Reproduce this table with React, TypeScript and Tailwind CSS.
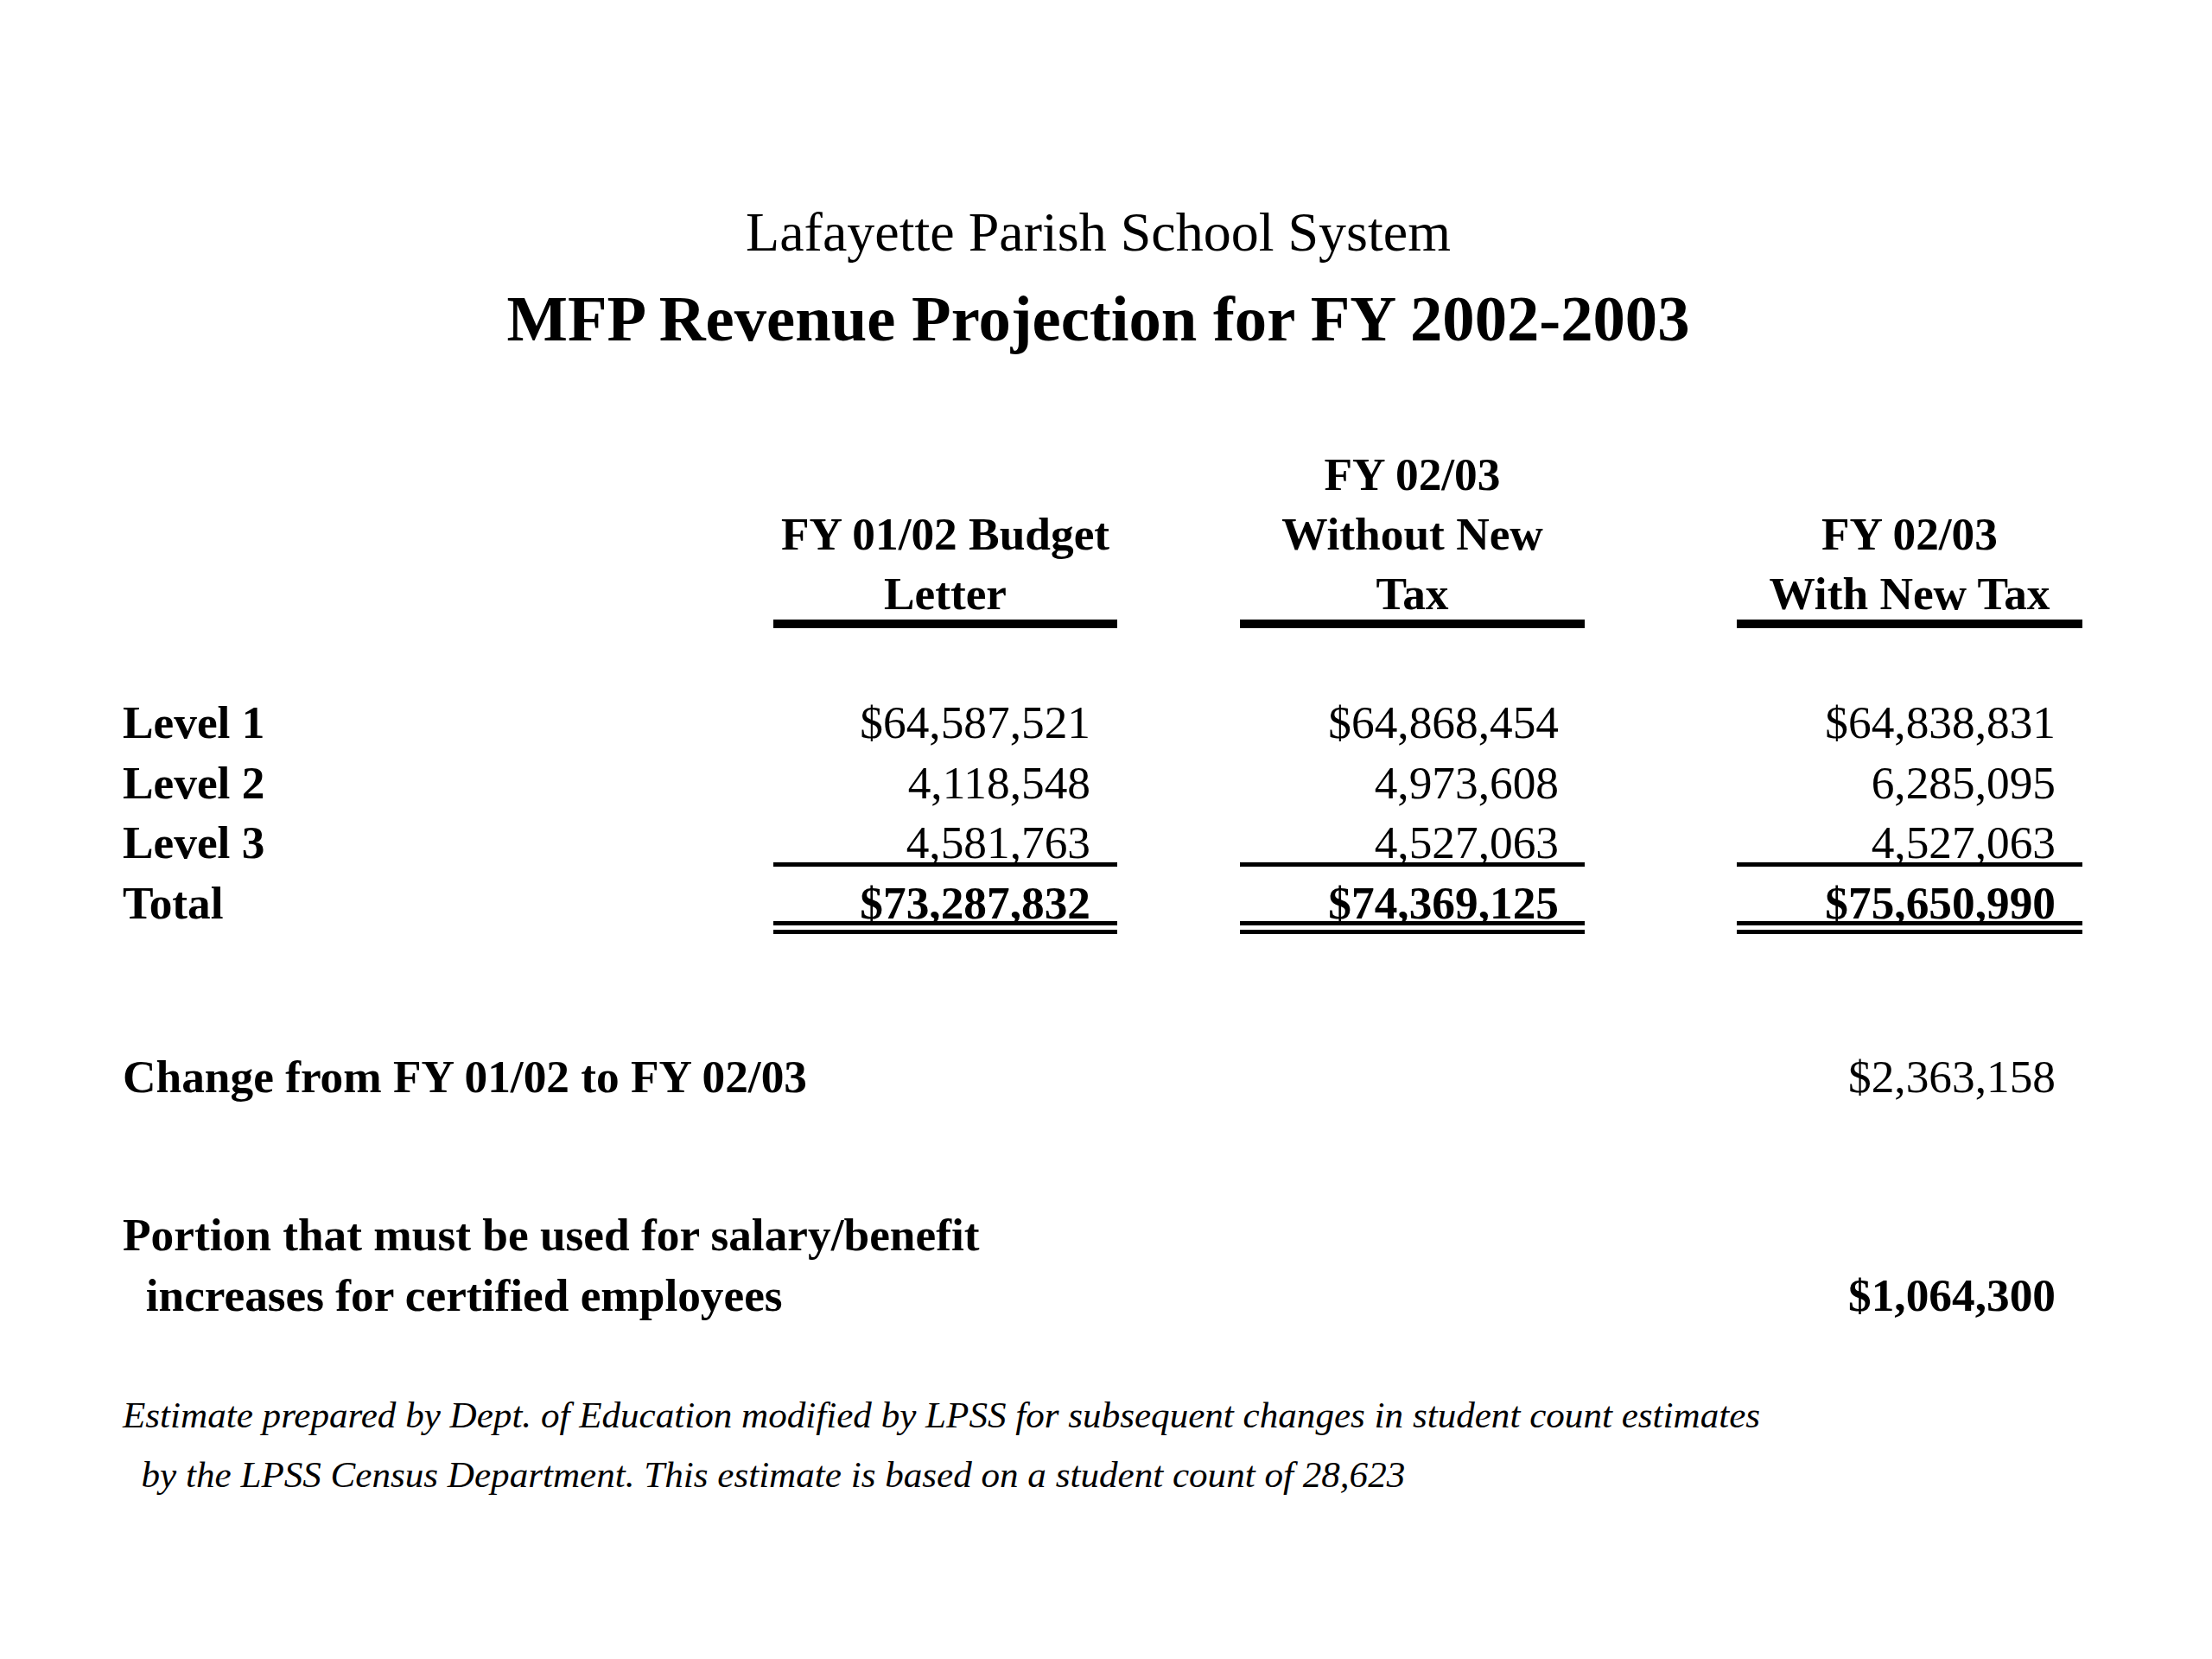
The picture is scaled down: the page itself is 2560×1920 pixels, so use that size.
import React from "react";

const serif = { fontFamily: '"Liberation Serif", "Times New Roman", Times, serif' };

type RowProps = {
  label: string;
  values: string[];
  bold?: boolean;
  h: string;
  border?: "none" | "single" | "double";
  lead: string;
};

function DataRow({ label, values, bold, h, border = "none", lead }: RowProps) {
  const borderCls =
    border === "single"
      ? "border-b-[5px] border-solid border-black"
      : border === "double"
      ? "border-b-[15px] border-double border-black"
      : "";
  const labelBorder =
    border === "single"
      ? "border-b-[5px] border-solid border-transparent"
      : border === "double"
      ? "border-b-[15px] border-double border-transparent"
      : "";
  const weight = bold ? "font-bold" : "font-normal";
  return (
    <div className="flex">
      <div className={`w-[753px] ${h} flex items-end font-bold ${labelBorder}`}>
        <span className={lead}>{label}</span>
      </div>
      <div className={`w-[398px] ${h} flex items-end justify-end pr-[31px] ${weight} ${borderCls}`}>
        <span className={lead}>{values[0]}</span>
      </div>
      <div className={`w-[399px] ml-[142px] ${h} flex items-end justify-end pr-[30px] ${weight} ${borderCls}`}>
        <span className={lead}>{values[1]}</span>
      </div>
      <div className={`w-[400px] ml-[176px] ${h} flex items-end justify-end pr-[31px] ${weight} ${borderCls}`}>
        <span className={lead}>{values[2]}</span>
      </div>
    </div>
  );
}

export default function App() {
  return (
    <div className="w-[2560px] min-h-[1920px] bg-white text-black" style={serif}>
      {/* Titles */}
      <div className="pt-[237px] pr-[18px] text-center">
        <div className="text-[64px] leading-none font-normal">Lafayette Parish School System</div>
        <div className="mt-[31px] text-[74.67px] leading-none font-bold">
          MFP Revenue Projection for FY 2002-2003
        </div>
      </div>

      <div className="pl-[142px] text-[53.33px]">
        {/* Header row */}
        <div className="mt-[108px] flex items-end font-bold leading-[69.33px]">
          <div className="w-[753px]" />
          <div className="w-[398px] text-center border-b-[10px] border-black">
            <div className="-mb-[6px]">
              FY 01/02 Budget
              <br />
              Letter
            </div>
          </div>
          <div className="w-[399px] ml-[142px] text-center border-b-[10px] border-black">
            <div className="-mb-[6px]">
              FY 02/03
              <br />
              Without New
              <br />
              Tax
            </div>
          </div>
          <div className="w-[400px] ml-[176px] text-center border-b-[10px] border-black">
            <div className="-mb-[6px]">
              FY 02/03
              <br />
              With New Tax
            </div>
          </div>
        </div>

        {/* Data rows */}
        <div className="mt-[63px]">
          <DataRow
            label="Level 1"
            values={["$64,587,521", "$64,868,454", "$64,838,831"]}
            h="h-[69.5px]"
            lead="leading-[46px]"
          />
          <DataRow
            label="Level 2"
            values={["4,118,548", "4,973,608", "6,285,095"]}
            h="h-[70px]"
            lead="leading-[46px]"
          />
          <DataRow
            label="Level 3"
            values={["4,581,763", "4,527,063", "4,527,063"]}
            h="h-[74px]"
            border="single"
            lead="leading-[46px]"
          />
          <DataRow
            label="Total"
            values={["$73,287,832", "$74,369,125", "$75,650,990"]}
            bold
            h="h-[78px]"
            border="double"
            lead="leading-[42px]"
          />
        </div>

        {/* Change row */}
        <div className="mt-[131px] flex leading-[69.33px]">
          <div className="w-[1868px] font-bold">Change from FY 01/02 to FY 02/03</div>
          <div className="w-[400px] text-right pr-[31px]">$2,363,158</div>
        </div>

        {/* Portion row */}
        <div className="mt-[114px] flex items-end leading-[69.33px]">
          <div className="w-[1868px] font-bold whitespace-pre">
            {"Portion that must be used for salary/benefit\n  increases for certified employees"}
          </div>
          <div className="w-[400px] text-right pr-[31px] font-bold">$1,064,300</div>
        </div>

        {/* Footer */}
        <div className="mt-[69px] text-[43.1px] italic leading-[69.33px] whitespace-pre">
          {"Estimate prepared by Dept. of Education modified by LPSS for subsequent changes in student count estimates\n  by the LPSS Census Department. This estimate is based on a student count of 28,623"}
        </div>
      </div>
    </div>
  );
}
